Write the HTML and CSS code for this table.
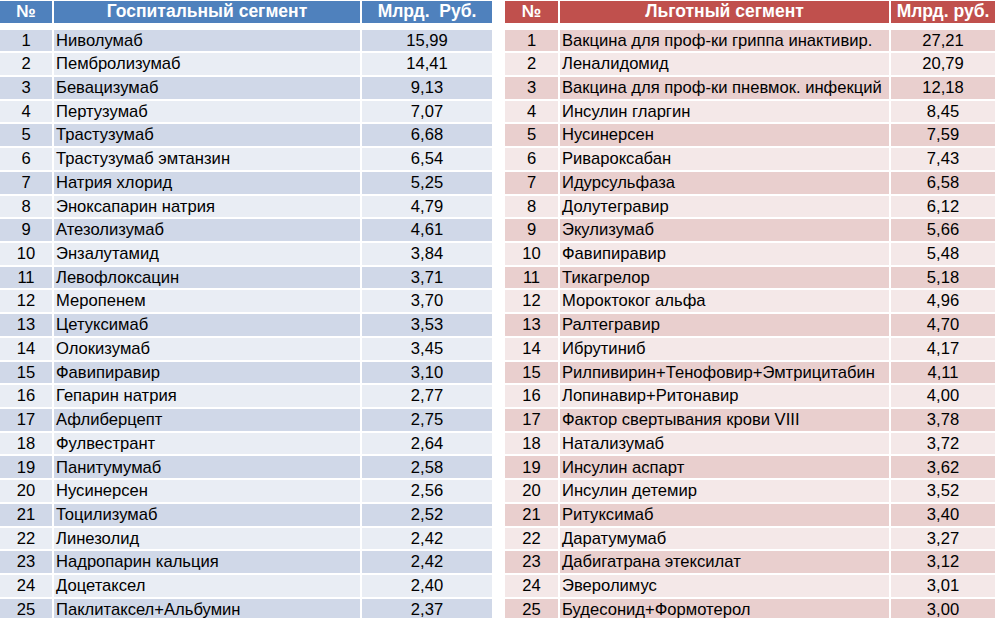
FILE: index.html
```html
<!DOCTYPE html>
<html lang="ru">
<head>
<meta charset="utf-8">
<title>Сегменты</title>
<link rel="stylesheet" href="styles.css">
</head>
<body>
<div class="page">
  <div class="tbl tbl-blue">
    <div class="row head"><div class="c">№</div><div class="c">Госпитальный сегмент</div><div class="c">Млрд.&nbsp; Руб.</div></div>
    <div class="row"><div class="c">1</div><div class="c n">Ниволумаб</div><div class="c">15,99</div></div>
    <div class="row"><div class="c">2</div><div class="c n">Пембролизумаб</div><div class="c">14,41</div></div>
    <div class="row"><div class="c">3</div><div class="c n">Бевацизумаб</div><div class="c">9,13</div></div>
    <div class="row"><div class="c">4</div><div class="c n">Пертузумаб</div><div class="c">7,07</div></div>
    <div class="row"><div class="c">5</div><div class="c n">Трастузумаб</div><div class="c">6,68</div></div>
    <div class="row"><div class="c">6</div><div class="c n">Трастузумаб эмтанзин</div><div class="c">6,54</div></div>
    <div class="row"><div class="c">7</div><div class="c n">Натрия хлорид</div><div class="c">5,25</div></div>
    <div class="row"><div class="c">8</div><div class="c n">Эноксапарин натрия</div><div class="c">4,79</div></div>
    <div class="row"><div class="c">9</div><div class="c n">Атезолизумаб</div><div class="c">4,61</div></div>
    <div class="row"><div class="c">10</div><div class="c n">Энзалутамид</div><div class="c">3,84</div></div>
    <div class="row"><div class="c">11</div><div class="c n">Левофлоксацин</div><div class="c">3,71</div></div>
    <div class="row"><div class="c">12</div><div class="c n">Меропенем</div><div class="c">3,70</div></div>
    <div class="row"><div class="c">13</div><div class="c n">Цетуксимаб</div><div class="c">3,53</div></div>
    <div class="row"><div class="c">14</div><div class="c n">Олокизумаб</div><div class="c">3,45</div></div>
    <div class="row"><div class="c">15</div><div class="c n">Фавипиравир</div><div class="c">3,10</div></div>
    <div class="row"><div class="c">16</div><div class="c n">Гепарин натрия</div><div class="c">2,77</div></div>
    <div class="row"><div class="c">17</div><div class="c n">Афлиберцепт</div><div class="c">2,75</div></div>
    <div class="row"><div class="c">18</div><div class="c n">Фулвестрант</div><div class="c">2,64</div></div>
    <div class="row"><div class="c">19</div><div class="c n">Панитумумаб</div><div class="c">2,58</div></div>
    <div class="row"><div class="c">20</div><div class="c n">Нусинерсен</div><div class="c">2,56</div></div>
    <div class="row"><div class="c">21</div><div class="c n">Тоцилизумаб</div><div class="c">2,52</div></div>
    <div class="row"><div class="c">22</div><div class="c n">Линезолид</div><div class="c">2,42</div></div>
    <div class="row"><div class="c">23</div><div class="c n">Надропарин кальция</div><div class="c">2,42</div></div>
    <div class="row"><div class="c">24</div><div class="c n">Доцетаксел</div><div class="c">2,40</div></div>
    <div class="row"><div class="c">25</div><div class="c n">Паклитаксел+Альбумин</div><div class="c">2,37</div></div>
  </div>
  <div class="tbl tbl-red">
    <div class="row head"><div class="c">№</div><div class="c">Льготный сегмент</div><div class="c">Млрд. руб.</div></div>
    <div class="row"><div class="c">1</div><div class="c n">Вакцина для проф-ки гриппа инактивир.</div><div class="c">27,21</div></div>
    <div class="row"><div class="c">2</div><div class="c n">Леналидомид</div><div class="c">20,79</div></div>
    <div class="row"><div class="c">3</div><div class="c n">Вакцина для проф-ки пневмок. инфекций</div><div class="c">12,18</div></div>
    <div class="row"><div class="c">4</div><div class="c n">Инсулин гларгин</div><div class="c">8,45</div></div>
    <div class="row"><div class="c">5</div><div class="c n">Нусинерсен</div><div class="c">7,59</div></div>
    <div class="row"><div class="c">6</div><div class="c n">Ривароксабан</div><div class="c">7,43</div></div>
    <div class="row"><div class="c">7</div><div class="c n">Идурсульфаза</div><div class="c">6,58</div></div>
    <div class="row"><div class="c">8</div><div class="c n">Долутегравир</div><div class="c">6,12</div></div>
    <div class="row"><div class="c">9</div><div class="c n">Экулизумаб</div><div class="c">5,66</div></div>
    <div class="row"><div class="c">10</div><div class="c n">Фавипиравир</div><div class="c">5,48</div></div>
    <div class="row"><div class="c">11</div><div class="c n">Тикагрелор</div><div class="c">5,18</div></div>
    <div class="row"><div class="c">12</div><div class="c n">Мороктоког альфа</div><div class="c">4,96</div></div>
    <div class="row"><div class="c">13</div><div class="c n">Ралтегравир</div><div class="c">4,70</div></div>
    <div class="row"><div class="c">14</div><div class="c n">Ибрутиниб</div><div class="c">4,17</div></div>
    <div class="row"><div class="c">15</div><div class="c n">Рилпивирин+Тенофовир+Эмтрицитабин</div><div class="c">4,11</div></div>
    <div class="row"><div class="c">16</div><div class="c n">Лопинавир+Ритонавир</div><div class="c">4,00</div></div>
    <div class="row"><div class="c">17</div><div class="c n">Фактор свертывания крови VIII</div><div class="c">3,78</div></div>
    <div class="row"><div class="c">18</div><div class="c n">Натализумаб</div><div class="c">3,72</div></div>
    <div class="row"><div class="c">19</div><div class="c n">Инсулин аспарт</div><div class="c">3,62</div></div>
    <div class="row"><div class="c">20</div><div class="c n">Инсулин детемир</div><div class="c">3,52</div></div>
    <div class="row"><div class="c">21</div><div class="c n">Ритуксимаб</div><div class="c">3,40</div></div>
    <div class="row"><div class="c">22</div><div class="c n">Даратумумаб</div><div class="c">3,27</div></div>
    <div class="row"><div class="c">23</div><div class="c n">Дабигатрана этексилат</div><div class="c">3,12</div></div>
    <div class="row"><div class="c">24</div><div class="c n">Эверолимус</div><div class="c">3,01</div></div>
    <div class="row"><div class="c">25</div><div class="c n">Будесонид+Формотерол</div><div class="c">3,00</div></div>
  </div>
</div>
</body>
</html>
```
FILE: styles.css
```css
html, body {
  margin: 0;
  padding: 0;
  background: #ffffff;
}
body {
  font-family: "Liberation Sans", Arial, sans-serif;
  font-size: 16.6px;
  color: #000000;
  overflow: hidden;
}
.page {
  display: flex;
  gap: 13px;
  padding-top: 1px;
  width: 995px;
}
.tbl {
  display: flex;
  flex-direction: column;
  gap: 2px;
}
.row {
  display: grid;
  column-gap: 2px;
  height: 21.72px;
}
.tbl-blue .row { grid-template-columns: 52px 306px 130px; }
.tbl-red .row { grid-template-columns: 53px 329px 104px; }
.c {
  display: flex;
  align-items: center;
  justify-content: center;
  white-space: nowrap;
  overflow: hidden;
  line-height: 1;
  padding-top: 1px;
}
.c.n {
  justify-content: flex-start;
  padding-left: 2px;
}
.head {
  height: 22px;
  margin-bottom: 4.5px;
  font-size: 17.5px;
  font-weight: bold;
  color: #ffffff;
}
.head .c { padding-top: 0; }
.tbl-blue .head .c { background: #4f81bd; }
.tbl-red .head .c { background: #c0504d; }
.tbl-blue .row:nth-child(even) .c { background: #d0d8e8; }
.tbl-blue .row:nth-child(odd):not(.head) .c { background: #e9edf4; }
.tbl-red .row:nth-child(even) .c { background: #e9cfce; }
.tbl-red .row:nth-child(odd):not(.head) .c { background: #f4e8e8; }
```
